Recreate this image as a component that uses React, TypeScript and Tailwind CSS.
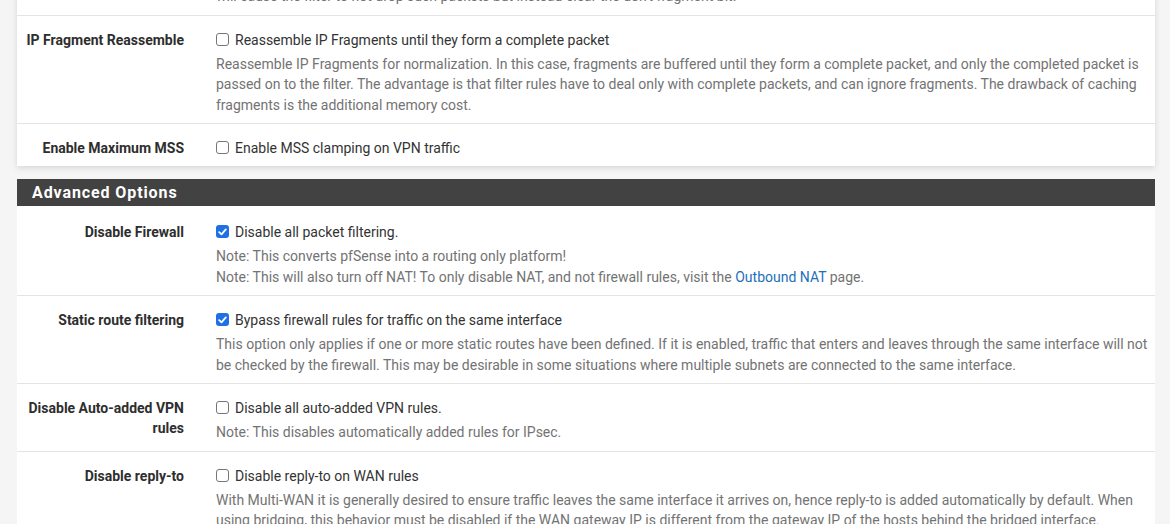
import React from "react";

type Row = {
  label: string[];
  text: string;
  checked: boolean;
  help?: React.ReactNode[];
};

function Check({ on }: { on: boolean }) {
  if (on) {
    return (
      <span className="mt-[3px] flex h-[13px] w-[13px] shrink-0 items-center justify-center rounded-[3px] bg-[#1f6fe5]">
        <svg width="9" height="8" viewBox="0 0 9 8" fill="none">
          <path d="M1.2 4.2 3.5 6.4 7.8 1.4" stroke="white" strokeWidth="1.8" strokeLinecap="round" strokeLinejoin="round" />
        </svg>
      </span>
    );
  }
  return <span className="mt-[3px] h-[13px] w-[13px] shrink-0 rounded-[3px] border border-[#767676] bg-white" />;
}

function FormRow({ label, text, checked, help, last }: Row & { last?: boolean }) {
  return (
    <div className={"flex pt-[14px] pb-[8px] " + (last ? "" : "border-b border-[#e4e4e4]")}>
      <div className="w-[183px] shrink-0 pr-[16px] text-right text-[14px] font-bold leading-[20px] text-[#2e2e2e]">
        {label.map((l) => (
          <div key={l}>{l}</div>
        ))}
      </div>
      <div className="flex-1 pl-[16px] pr-[7px]">
        <div className="flex gap-[6px] text-[14px] leading-[20px] text-[#333]">
          <Check on={checked} />
          <span>{text}</span>
        </div>
        {help && (
          <div className="mt-[4px] text-[14px] leading-[20.5px] text-[#737373]">
            {help.map((h, i) => (
              <div key={i}>{h}</div>
            ))}
          </div>
        )}
      </div>
    </div>
  );
}

export default function App() {
  const advanced: Row[] = [
    {
      label: ["Disable Firewall"],
      text: "Disable all packet filtering.",
      checked: true,
      help: [
        "Note: This converts pfSense into a routing only platform!",
        <>
          Note: This will also turn off NAT! To only disable NAT, and not firewall rules, visit the{" "}
          <span className="text-[#1e6fb8]">Outbound NAT</span> page.
        </>,
      ],
    },
    {
      label: ["Static route filtering"],
      text: "Bypass firewall rules for traffic on the same interface",
      checked: true,
      help: [
        "This option only applies if one or more static routes have been defined. If it is enabled, traffic that enters and leaves through the same interface will not be checked by the firewall. This may be desirable in some situations where multiple subnets are connected to the same interface.",
      ],
    },
    {
      label: ["Disable Auto-added VPN", "rules"],
      text: "Disable all auto-added VPN rules.",
      checked: false,
      help: ["Note: This disables automatically added rules for IPsec."],
    },
    {
      label: ["Disable reply-to"],
      text: "Disable reply-to on WAN rules",
      checked: false,
      help: [
        "With Multi-WAN it is generally desired to ensure traffic leaves the same interface it arrives on, hence reply-to is added automatically by default. When using bridging, this behavior must be disabled if the WAN gateway IP is different from the gateway IP of the hosts behind the bridged interface.",
      ],
    },
  ];

  return (
    <div className="h-[524px] overflow-hidden bg-[#f5f5f5] pl-[17px] pr-[15px] font-['Roboto',sans-serif]">
      <div className="bg-white shadow-[0_2px_6px_rgba(0,0,0,0.13)]">
        <div className="-mt-[14px] flex border-b border-[#e4e4e4] pb-[8px]">
          <div className="w-[183px] shrink-0" />
          <div className="flex-1 pl-[16px] text-[14px] leading-[20.5px] text-[#737373]">
            will cause the filter to not drop such packets but instead clear the don't fragment bit.
          </div>
        </div>
        <FormRow
          label={["IP Fragment Reassemble"]}
          text="Reassemble IP Fragments until they form a complete packet"
          checked={false}
          help={[
            "Reassemble IP Fragments for normalization. In this case, fragments are buffered until they form a complete packet, and only the completed packet is passed on to the filter. The advantage is that filter rules have to deal only with complete packets, and can ignore fragments. The drawback of caching fragments is the additional memory cost.",
          ]}
        />
        <FormRow label={["Enable Maximum MSS"]} text="Enable MSS clamping on VPN traffic" checked={false} last />
      </div>

      <div className="mt-[13px] bg-white">
        <div className="h-[27px] bg-[#424242] pl-[15px] text-[16px] font-bold leading-[27px] tracking-[0.9px] text-white">
          Advanced Options
        </div>
        <div className="pt-[2px]">
          {advanced.map((r) => (
            <FormRow key={r.label[0]} {...r} />
          ))}
        </div>
      </div>
    </div>
  );
}
